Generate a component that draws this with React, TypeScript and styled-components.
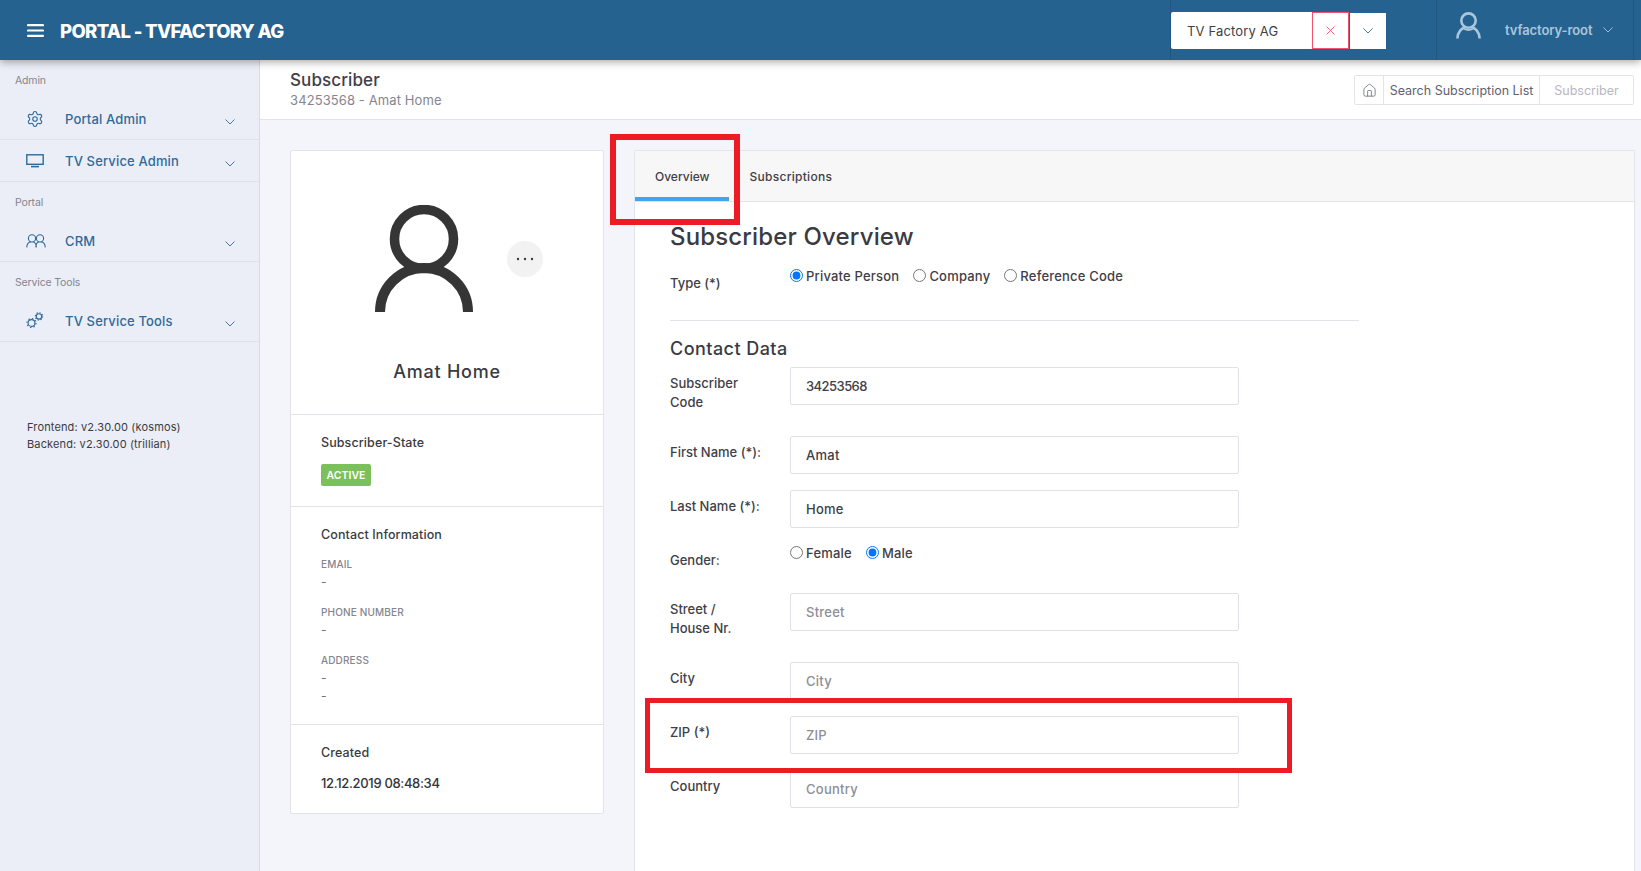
import React from "react";
import styled, { createGlobalStyle } from "styled-components";
import { Settings, Home } from "lucide-react";

const Global = createGlobalStyle`
  html, body { margin: 0; padding: 0; height: 100%; }
  body { font-family: Inter, "Open Sans", "Liberation Sans", sans-serif; color: #32343c; background: #f4f5fa; overflow: hidden; }
  #root { height: 100%; }
  * { box-sizing: border-box; }
`;

const Page = styled.div`
  position: relative;
  width: 1641px;
  height: 871px;
  display: flex;
  flex-direction: column;
  overflow: hidden;
`;

const TopBar = styled.header`
  height: 60px;
  flex: none;
  background: #26628f;
  box-shadow: 0 2px 8px rgba(0, 0, 0, 0.35);
  display: flex;
  align-items: center;
  position: relative;
  z-index: 2;
`;
const Burger = styled.span`
  display: flex;
  margin-left: 27px;
  margin-right: 16px;
`;
const Brand = styled.div`
  margin-top: 2px;
  font-size: 18.5px;
  font-weight: 800;
  letter-spacing: -0.65px;
  color: #fff;
  white-space: nowrap;
`;
const CompanyBox = styled.div`
  margin-left: auto;
  height: 60px;
  padding-top: 1px;
  border-left: 1px solid #1f5780;
  display: flex;
  align-items: center;
  width: 266px;
`;
const CompanyName = styled.div`
  width: 141px;
  height: 37px;
  background: #fff;
  border-radius: 2px 0 0 2px;
  display: flex;
  align-items: center;
  padding-left: 16px;
  font-size: 13px;
  letter-spacing: 0.15px;
  color: #3f4047;
`;
const ClearBtn = styled.div`
  width: 37px;
  height: 37px;
  background: #fff;
  border: 1px solid #f4516c;
  display: flex;
  align-items: center;
  justify-content: center;
`;
const OpenBtn = styled.div`
  width: 36px;
  height: 36px;
  margin-left: 1px;
  background: #fff;
  display: flex;
  align-items: center;
  justify-content: center;
`;
const UserBox = styled.div`
  width: 198px;
  height: 60px;
  border-left: 1px solid #1f5780;
  border-right: 1px solid #1f5780;
  display: flex;
  align-items: center;
  padding-left: 19px;
  margin-right: 7px;
`;
const UserIcon = styled.svg`
  margin-top: -10px;
`;
const UserName = styled.span`
  font-size: 13px;
  font-weight: 600;
  letter-spacing: -0.1px;
  color: #a9c6dc;
  margin-left: 24px;
  margin-right: 11px;
`;

const Body = styled.div`
  flex: 1;
  display: flex;
  min-height: 0;
`;
const Sidebar = styled.aside`
  width: 260px;
  flex: none;
  background: #ebeef6;
  border-right: 1px solid #d8dbe6;
`;
const NavLabel = styled.div`
  height: 38px;
  padding: 2px 0 0 15px;
  display: flex;
  align-items: center;
  font-size: 10.5px;
  letter-spacing: -0.15px;
  color: #85858f;
`;
const NavItem = styled.div`
  height: 42px;
  border-bottom: 1px solid #dfe1e8;
  display: flex;
  align-items: center;
  color: #2f6a9c;
  font-size: 13px;
  font-weight: 500;
  letter-spacing: 0.15px;
  padding-right: 24px;
`;
const NavIcon = styled.span`
  width: 65px;
  flex: none;
  padding-left: 26px;
  display: flex;
`;
const NavText = styled.span`
  flex: 1;
`;
const NavChevron = styled.span`
  display: flex;
  margin-top: 6px;
`;
const Versions = styled.div`
  margin-top: 77px;
  padding-left: 27px;
  font-size: 11px;
  line-height: 17px;
  letter-spacing: 0.14px;
  color: #3a3b42;
`;

const Main = styled.main`
  flex: 1;
  display: flex;
  flex-direction: column;
  min-width: 0;
`;
const SubHeader = styled.div`
  height: 60px;
  flex: none;
  background: #fff;
  border-bottom: 1px solid #e2e4ea;
  display: flex;
  justify-content: space-between;
  align-items: center;
  padding: 1px 7px 0 30px;
`;
const PageTitle = styled.div`
  font-size: 17px;
  font-weight: 500;
  line-height: 20px;
  letter-spacing: 0.1px;
  color: #3f4047;
`;
const PageSub = styled.div`
  margin-top: 1px;
  font-size: 13px;
  line-height: 19px;
  letter-spacing: 0.1px;
  color: #85858f;
`;
const Crumbs = styled.nav`
  display: flex;
  height: 30px;
  border: 1px solid #e2e4ea;
  border-radius: 2px;
  font-size: 12.5px;
`;
const Crumb = styled.span<{ $muted?: boolean; $w: number }>`
  width: ${(p) => p.$w}px;
  display: flex;
  align-items: center;
  justify-content: center;
  color: ${(p) => (p.$muted ? "#b7b8bf" : "#5f6270")};
  & + & { border-left: 1px solid #e2e4ea; }
`;

const Content = styled.div`
  flex: 1;
  display: flex;
  gap: 30px;
  padding: 30px 6px 0 30px;
  min-height: 0;
`;
const ProfileCard = styled.section`
  width: 314px;
  flex: none;
  align-self: flex-start;
  background: #fff;
  border: 1px solid #e2e4ea;
  border-radius: 2px;
`;
const ProfileTop = styled.div`
  height: 264px;
  border-bottom: 1px solid #e2e4ea;
  padding-top: 54px;
`;
const AvatarRow = styled.div`
  display: flex;
  align-items: flex-start;
  padding-left: 84px;
  gap: 34px;
`;
const DotsBtn = styled.div`
  width: 36px;
  height: 36px;
  margin-top: 36px;
  border-radius: 50%;
  background: #f2f2f3;
  display: flex;
  align-items: center;
  justify-content: center;
`;
const ProfileName = styled.div`
  margin-top: 48px;
  text-align: center;
  font-size: 18px;
  line-height: 24px;
  font-weight: 500;
  letter-spacing: 0.75px;
  color: #3a3b42;
`;
const ProfileSection = styled.div`
  padding: 19px 0 19px 30px;
  border-bottom: 1px solid #e2e4ea;
  &:last-child { border-bottom: 0; padding-bottom: 21px; }
`;
const SectionTitle = styled.div`
  font-size: 12.5px;
  font-weight: 500;
  line-height: 18px;
  letter-spacing: 0.1px;
  color: #3a3b42;
`;
const Badge = styled.span`
  display: flex;
  align-items: center;
  justify-content: center;
  width: 50px;
  height: 22px;
  margin: 12px 0 1px;
  border-radius: 2px;
  background: #7cc05c;
  color: #fff;
  font-size: 10.5px;
  font-weight: 600;
`;
const FieldKey = styled.div<{ $first?: boolean }>`
  margin-top: ${(p) => (p.$first ? 11 : 12)}px;
  font-size: 10px;
  line-height: 18px;
  font-weight: 500;
  letter-spacing: 0.15px;
  color: #85858f;
`;
const FieldVal = styled.div`
  font-size: 12px;
  line-height: 18px;
  color: #6f7079;
`;
const CreatedVal = styled.div`
  margin-top: 12px;
  font-size: 13px;
  font-weight: 500;
  line-height: 18px;
  letter-spacing: -0.33px;
  color: #32343c;
`;

const DetailCard = styled.section`
  flex: 1;
  background: #fff;
  border: 1px solid #e2e4ea;
  border-bottom: 0;
  border-radius: 2px 2px 0 0;
`;
const TabBar = styled.div`
  height: 51px;
  background: #f7f7f7;
  border-bottom: 1px solid #e2e4ea;
  display: flex;
`;
const Tab = styled.div<{ $active?: boolean }>`
  height: 50px;
  padding: 4px 20px 0;
  display: flex;
  align-items: center;
  font-size: 12px;
  font-weight: 500;
  color: #3f4047;
  letter-spacing: ${(p) => (p.$active ? "0" : "0.28px")};
  border-bottom: 4px solid ${(p) => (p.$active ? "#44a3ee" : "transparent")};
`;
const FormArea = styled.div`
  padding: 20px 0 0 35px;
  width: 724px;
`;
const Heading = styled.h2`
  margin: 0 0 15px;
  font-size: 24px;
  line-height: 30px;
  font-weight: 500;
  letter-spacing: 0.16px;
  color: #3a3b42;
`;
const Row = styled.div<{ $gap?: number }>`
  display: grid;
  grid-template-columns: 120px 449px;
  margin-bottom: ${(p) => p.$gap ?? 16}px;
`;
const Label = styled.div`
  padding: 7px 0 8px 0;
  font-size: 13px;
  line-height: 19px;
  font-weight: 500;
  color: #3f4047;
  white-space: nowrap;
`;
const Radios = styled.div`
  display: flex;
  gap: 14px;
  height: 18px;
`;
const RadioLabel = styled.label`
  display: flex;
  align-items: center;
  gap: 3px;
  font-size: 13px;
  letter-spacing: 0.2px;
  color: #3f4047;
  font-weight: 500;
`;
const RadioInput = styled.input`
  width: 13px;
  height: 13px;
  margin: 0;
  position: relative;
  top: -1px;
`;
const Divider = styled.hr`
  margin: 0 0 16px;
  border: 0;
  border-top: 1px solid #e2e4ea;
  width: 689px;
`;
const SubHeading = styled.h3`
  margin: 0 0 6px;
  font-size: 18px;
  line-height: 24px;
  font-weight: 500;
  letter-spacing: 0.45px;
  color: #3a3b42;
`;
const TextInput = styled.input<{ $digits?: boolean }>`
  width: 449px;
  height: 38px;
  padding: 0 15px;
  border: 1px solid #dfe1e6;
  border-radius: 2px;
  background: #fff;
  font-family: inherit;
  font-size: 13px;
  font-weight: 500;
  letter-spacing: ${(p) => (p.$digits ? "-0.55px" : "0.25px")};
  color: #3f4047;
  outline: none;
  &::placeholder { color: #8d8e96; opacity: 1; font-weight: 500; }
`;

const Annotation = styled.div<{ $l: number; $t: number; $w: number; $h: number; $b: number }>`
  position: absolute;
  left: ${(p) => p.$l}px;
  top: ${(p) => p.$t}px;
  width: ${(p) => p.$w}px;
  height: ${(p) => p.$h}px;
  border: ${(p) => p.$b}px solid #ed1c24;
  pointer-events: none;
  z-index: 3;
`;

const Chevron = ({ c = "#2f6a9c", w = 10 }: { c?: string; w?: number }) => (
  <svg width={w} height={w * 0.6} viewBox="0 0 10 6" fill="none" stroke={c} strokeWidth="0.9">
    <path d="M0.5 0.5 L5 5 L9.5 0.5" />
  </svg>
);

const MonitorIcon = () => (
  <svg width="18" height="14" viewBox="0 0 18 14" fill="none" stroke="#2f6a9c">
    <rect x="0.8" y="0.8" width="16.4" height="9.5" strokeWidth="1.4" />
    <path d="M5 12.6 H13" strokeWidth="1.6" />
  </svg>
);

const UsersIcon = () => (
  <svg width="20" height="14" viewBox="0 0 20 14" fill="none" stroke="#2f6a9c" strokeWidth="1.1">
    <circle cx="6" cy="4.4" r="3.6" />
    <circle cx="14" cy="4.4" r="3.6" />
    <path d="M0.7 13.4 C1 9.6 3 8 5 7.8 M7 7.8 C9 8.2 10.2 10 10.4 13.4 M9.8 13.4 C10 10 11 8.2 13 7.8 M15 7.8 C17 8 19 9.6 19.3 13.4" />
  </svg>
);

const CogsIcon = () => (
  <svg width="18" height="17" viewBox="0 0 18 17" fill="none" stroke="#2f6a9c">
    <circle cx="5.5" cy="11" r="3.4" strokeWidth="1.1" />
    <circle cx="5.5" cy="11" r="4.5" strokeWidth="1.2" strokeDasharray="1.4 2.1" />
    <circle cx="13" cy="4.4" r="2.7" strokeWidth="1.1" />
    <circle cx="13" cy="4.4" r="3.7" strokeWidth="1.1" strokeDasharray="1.3 1.6" />
  </svg>
);

const Nav = ({ icon, children }: { icon: React.ReactNode; children: React.ReactNode }) => (
  <NavItem>
    <NavIcon>{icon}</NavIcon>
    <NavText>{children}</NavText>
    <NavChevron>
      <Chevron />
    </NavChevron>
  </NavItem>
);

export default function App() {
  return (
    <Page>
      <Global />
      <TopBar>
        <Burger>
          <svg width="17" height="13" viewBox="0 0 17 13" stroke="#fff" strokeWidth="2.2" strokeLinecap="round">
            <path d="M1 1.2 H16 M1 6.5 H16 M1 11.8 H16" />
          </svg>
        </Burger>
        <Brand>PORTAL - TVFACTORY AG</Brand>
        <CompanyBox>
          <CompanyName>TV Factory AG</CompanyName>
          <ClearBtn>
            <svg width="9" height="9" viewBox="0 0 9 9" stroke="#f4516c" strokeWidth="0.9">
              <path d="M0.5 0.5 L8.5 8.5 M8.5 0.5 L0.5 8.5" />
            </svg>
          </ClearBtn>
          <OpenBtn>
            <Chevron />
          </OpenBtn>
        </CompanyBox>
        <UserBox>
          <UserIcon width="25" height="27" viewBox="0 0 25 27" fill="none" stroke="#a9c6dc" strokeWidth="2.6">
            <circle cx="12.5" cy="8.6" r="7.2" />
            <path d="M1.4 26.6 C1.4 20 6 15.6 9.5 15.4 M15.5 15.4 C19 15.6 23.6 20 23.6 26.6" />
            <path d="M7 16 C10 18.5 15 18.5 18 16" strokeWidth="2" />
          </UserIcon>
          <UserName>tvfactory-root</UserName>
          <Chevron c="#a9c6dc" />
        </UserBox>
      </TopBar>
      <Body>
        <Sidebar>
          <NavLabel>Admin</NavLabel>
          <Nav icon={<Settings size={18} strokeWidth={1.5} color="#2f6a9c" />}>Portal Admin</Nav>
          <Nav icon={<MonitorIcon />}>TV Service Admin</Nav>
          <NavLabel>Portal</NavLabel>
          <Nav icon={<UsersIcon />}>CRM</Nav>
          <NavLabel>Service Tools</NavLabel>
          <Nav icon={<CogsIcon />}>TV Service Tools</Nav>
          <Versions>
            Frontend: v2.30.00 (kosmos)
            <br />
            Backend: v2.30.00 (trillian)
          </Versions>
        </Sidebar>
        <Main>
          <SubHeader>
            <div>
              <PageTitle>Subscriber</PageTitle>
              <PageSub>34253568 - Amat Home</PageSub>
            </div>
            <Crumbs>
              <Crumb $w={28}>
                <Home size={15} strokeWidth={1.2} color="#5f6270" />
              </Crumb>
              <Crumb $w={156}>Search Subscription List</Crumb>
              <Crumb $w={94} $muted>
                Subscriber
              </Crumb>
            </Crumbs>
          </SubHeader>
          <Content>
            <ProfileCard>
              <ProfileTop>
                <AvatarRow>
                  <svg width="98" height="107" viewBox="0 0 98 107" fill="none" stroke="#353535">
                    <circle cx="49" cy="34" r="29.5" strokeWidth="9.5" />
                    <path d="M5 107 A44 44 0 0 1 93 107" strokeWidth="10" />
                  </svg>
                  <DotsBtn>
                    <svg width="18" height="4" viewBox="0 0 18 4" fill="#3a3b42">
                      <circle cx="2" cy="2" r="1.2" />
                      <circle cx="9" cy="2" r="1.2" />
                      <circle cx="16" cy="2" r="1.2" />
                    </svg>
                  </DotsBtn>
                </AvatarRow>
                <ProfileName>Amat Home</ProfileName>
              </ProfileTop>
              <ProfileSection>
                <SectionTitle>Subscriber-State</SectionTitle>
                <Badge>ACTIVE</Badge>
              </ProfileSection>
              <ProfileSection>
                <SectionTitle>Contact Information</SectionTitle>
                <FieldKey $first>EMAIL</FieldKey>
                <FieldVal>-</FieldVal>
                <FieldKey>PHONE NUMBER</FieldKey>
                <FieldVal>-</FieldVal>
                <FieldKey>ADDRESS</FieldKey>
                <FieldVal>-</FieldVal>
                <FieldVal>-</FieldVal>
              </ProfileSection>
              <ProfileSection>
                <SectionTitle>Created</SectionTitle>
                <CreatedVal>12.12.2019 08:48:34</CreatedVal>
              </ProfileSection>
            </ProfileCard>
            <DetailCard>
              <TabBar>
                <Tab $active>Overview</Tab>
                <Tab>Subscriptions</Tab>
              </TabBar>
              <FormArea>
                <Heading>Subscriber Overview</Heading>
                <Row $gap={19}>
                  <Label>Type (*)</Label>
                  <Radios>
                    <RadioLabel>
                      <RadioInput type="radio" name="type" defaultChecked />
                      Private Person
                    </RadioLabel>
                    <RadioLabel>
                      <RadioInput type="radio" name="type" />
                      Company
                    </RadioLabel>
                    <RadioLabel>
                      <RadioInput type="radio" name="type" />
                      Reference Code
                    </RadioLabel>
                  </Radios>
                </Row>
                <Divider />
                <SubHeading>Contact Data</SubHeading>
                <Row>
                  <Label>
                    Subscriber
                    <br />
                    Code
                  </Label>
                  <TextInput $digits defaultValue="34253568" />
                </Row>
                <Row>
                  <Label>First Name (*):</Label>
                  <TextInput defaultValue="Amat" />
                </Row>
                <Row>
                  <Label>Last Name (*):</Label>
                  <TextInput defaultValue="Home" />
                </Row>
                <Row $gap={15}>
                  <Label>Gender:</Label>
                  <Radios>
                    <RadioLabel>
                      <RadioInput type="radio" name="gender" />
                      Female
                    </RadioLabel>
                    <RadioLabel>
                      <RadioInput type="radio" name="gender" defaultChecked />
                      Male
                    </RadioLabel>
                  </Radios>
                </Row>
                <Row>
                  <Label>
                    Street /
                    <br />
                    House Nr.
                  </Label>
                  <TextInput placeholder="Street" />
                </Row>
                <Row>
                  <Label>City</Label>
                  <TextInput placeholder="City" />
                </Row>
                <Row>
                  <Label>ZIP (*)</Label>
                  <TextInput placeholder="ZIP" />
                </Row>
                <Row>
                  <Label>Country</Label>
                  <TextInput placeholder="Country" />
                </Row>
              </FormArea>
            </DetailCard>
          </Content>
        </Main>
      </Body>
      <Annotation $l={610} $t={134} $w={130} $h={91} $b={6} />
      <Annotation $l={645} $t={698} $w={647} $h={75} $b={5} />
    </Page>
  );
}
